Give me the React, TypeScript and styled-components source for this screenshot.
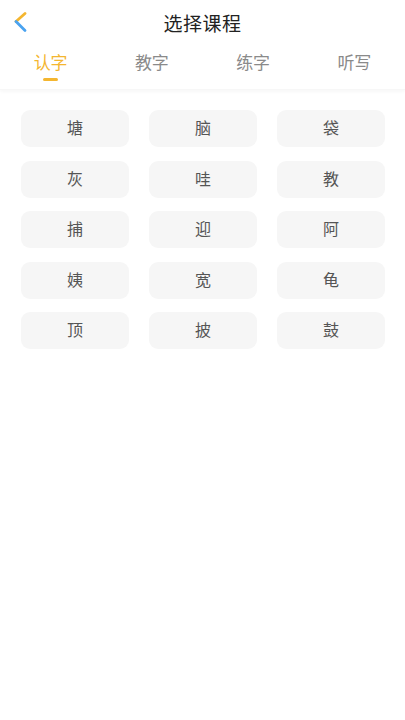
import React, { useState } from "react";
import styled, { createGlobalStyle } from "styled-components";

const Global = createGlobalStyle`
  html, body { margin: 0; padding: 0; background: #ffffff; }
  body { font-family: "Noto Sans CJK SC", "Noto Sans", sans-serif; }
  * { box-sizing: border-box; }
`;

const Page = styled.div`
  width: 405px;
  min-height: 720px;
  background: #ffffff;
  display: flex;
  flex-direction: column;
`;

const Header = styled.div`
  height: 48px;
  display: grid;
  grid-template-columns: 48px 1fr 48px;
  align-items: center;
`;

const BackButton = styled.button`
  border: none;
  background: transparent;
  padding: 0 0 0 12px;
  height: 48px;
  display: flex;
  align-items: center;
  cursor: pointer;
`;

const Title = styled.h1`
  margin: 0 0 2px;
  text-align: center;
  font-size: 19px;
  line-height: 24px;
  font-weight: 400;
  color: #222;
  letter-spacing: 0.5px;
`;

const TabBar = styled.div`
  height: 42px;
  display: grid;
  grid-template-columns: repeat(4, 1fr);
  box-shadow: 0 2px 3px rgba(0, 0, 0, 0.03);
  border-bottom: 1px solid #f7f7f7;
`;

const Tab = styled.div<{ $active: boolean }>`
  display: flex;
  flex-direction: column;
  align-items: center;
  padding-top: 3px;
  font-size: 17px;
  line-height: 22px;
  color: ${(p) => (p.$active ? "#F4B630" : "#8a8a8a")};
  cursor: pointer;
`;

const Indicator = styled.div<{ $active: boolean }>`
  width: 15px;
  height: 2.5px;
  border-radius: 2px;
  margin-top: 5px;
  background: ${(p) => (p.$active ? "#F4B630" : "transparent")};
`;

const Grid = styled.div`
  display: grid;
  grid-template-columns: repeat(3, 108px);
  column-gap: 20px;
  row-gap: 13.5px;
  padding: 20px 20px 0 21px;
`;

const Cell = styled.div`
  height: 37px;
  padding-bottom: 3px;
  border-radius: 9px;
  background: #f6f6f6;
  display: flex;
  align-items: center;
  justify-content: center;
  font-size: 16px;
  line-height: 20px;
  color: #555;
`;

const tabs = ["认字", "教字", "练字", "听写"];
const chars = ["塘", "脑", "袋", "灰", "哇", "教", "捕", "迎", "阿", "姨", "宽", "龟", "顶", "披", "鼓"];

export default function App() {
  const [active, setActive] = useState(0);
  return (
    <Page>
      <Global />
      <Header>
        <BackButton aria-label="back">
          <svg width="16" height="24" viewBox="0 0 16 24">
            <path d="M13 1.5 L4 9.5" stroke="#F4B630" strokeWidth="2.8" strokeLinecap="round" fill="none" />
            <path d="M4 9.5 L13 18.5" stroke="#4AA3F0" strokeWidth="2.8" strokeLinecap="round" fill="none" />
          </svg>
        </BackButton>
        <Title>选择课程</Title>
        <div />
      </Header>
      <TabBar>
        {tabs.map((t, i) => (
          <Tab key={t} $active={i === active} onClick={() => setActive(i)}>
            <span>{t}</span>
            <Indicator $active={i === active} />
          </Tab>
        ))}
      </TabBar>
      <Grid>
        {chars.map((c, i) => (
          <Cell key={i}>{c}</Cell>
        ))}
      </Grid>
    </Page>
  );
}
